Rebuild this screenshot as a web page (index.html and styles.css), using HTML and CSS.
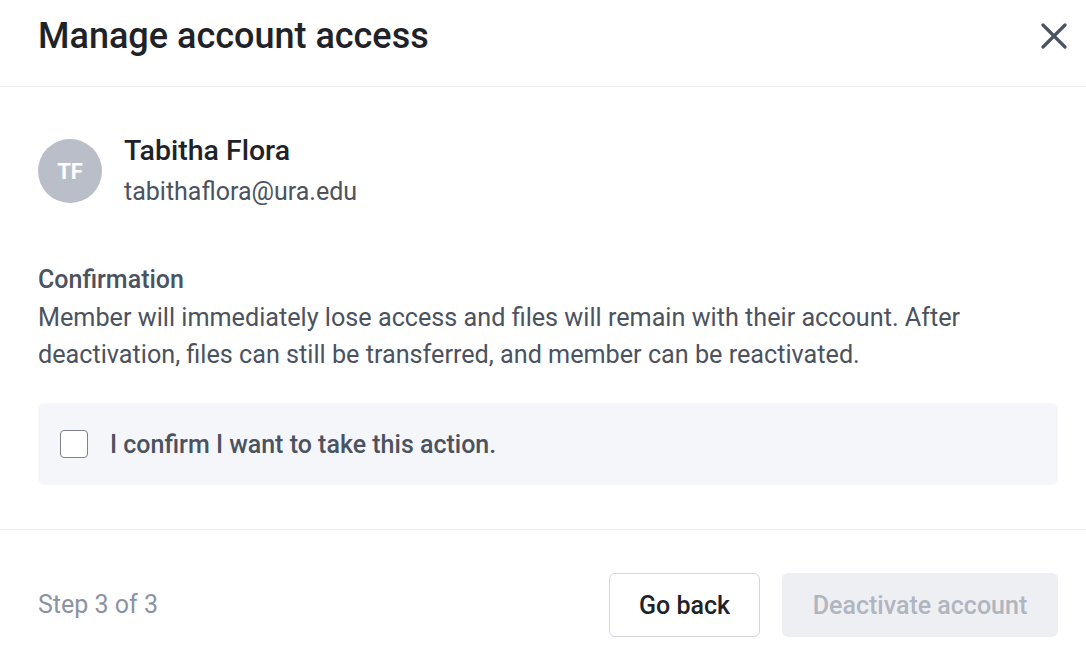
FILE: index.html
```html
<!DOCTYPE html>
<html lang="en">
<head>
    <meta charset="UTF-8">
    <meta name="viewport" content="width=device-width, initial-scale=1.0">
    <title>Manage account access</title>
    <link rel="stylesheet" href="styles.css">
</head>
<body>
    <div class="modal">
        <div class="modal-header">
            <h1>Manage account access</h1>
            <button class="close-btn" type="button" aria-label="Close">
                <svg width="26" height="26" viewBox="0 0 26 26">
                    <path d="M2 2 L24 24 M24 2 L2 24" stroke="#4b5260" stroke-width="3.2" stroke-linecap="round" fill="none"/>
                </svg>
            </button>
        </div>

        <div class="modal-body">
            <div class="member">
                <div class="avatar">TF</div>
                <div class="member-info">
                    <div class="member-name">Tabitha Flora</div>
                    <div class="member-email">tabithaflora@ura.edu</div>
                </div>
            </div>

            <h2>Confirmation</h2>
            <p>Member will immediately lose access and files will remain with their account. After deactivation, files can still be transferred, and member can be reactivated.</p>

            <label class="confirm-box">
                <input type="checkbox" id="confirm">
                <span>I confirm I want to take this action.</span>
            </label>
        </div>

        <div class="modal-footer">
            <span class="step">Step 3 of 3</span>
            <div class="actions">
                <button class="btn btn-secondary" type="button">Go back</button>
                <button class="btn btn-primary" type="button" id="deactivate" disabled>Deactivate account</button>
            </div>
        </div>
    </div>

    <script>
        document.getElementById('confirm').addEventListener('change', function() {
            document.getElementById('deactivate').disabled = !this.checked;
        });
    </script>
</body>
</html>
```

FILE: styles.css
```css
* {
    box-sizing: border-box;
}
body {
    margin: 0;
    font-family: Roboto, "Liberation Sans", Arial, sans-serif;
    background: #fff;
    color: #1f2329;
}
.modal {
    width: 1086px;
    height: 672px;
    display: flex;
    flex-direction: column;
}
.modal-header {
    height: 87px;
    display: flex;
    justify-content: space-between;
    align-items: flex-start;
    padding: 16px 19px 0 38px;
    border-bottom: 1px solid #eeeff2;
}
h1 {
    margin: 0;
    font-size: 36px;
    line-height: 40px;
    font-weight: 500;
    color: #1f2329;
}
.close-btn {
    background: none;
    border: none;
    padding: 0;
    margin-top: 7px;
    cursor: pointer;
    width: 26px;
    height: 26px;
}
.modal-body {
    padding: 48px 28px 44px 38px;
    border-bottom: 1px solid #eeeff2;
}
.member {
    display: flex;
    align-items: center;
    gap: 22px;
}
.avatar {
    width: 64px;
    height: 64px;
    border-radius: 50%;
    background: #b9bec8;
    color: #fff;
    font-size: 22px;
    font-weight: 700;
    display: flex;
    align-items: center;
    justify-content: center;
}
.member-name {
    font-size: 28.5px;
    line-height: 32px;
    font-weight: 500;
    color: #1f2329;
}
.member-email {
    margin-top: 10px;
    font-size: 25px;
    line-height: 30px;
    color: #4b5260;
}
h2 {
    margin: 54px 0 0;
    font-size: 25px;
    line-height: 37px;
    font-weight: 500;
    color: #4b5260;
}
p {
    margin: 1px 0 0;
    font-size: 25.2px;
    line-height: 37px;
    color: #4b5260;
}
.confirm-box {
    margin-top: 30px;
    height: 82px;
    display: flex;
    align-items: center;
    gap: 22px;
    padding: 0 22px;
    background: #f5f6fa;
    border-radius: 6px;
    cursor: pointer;
}
.confirm-box input {
    appearance: none;
    margin: 0;
    width: 28px;
    height: 28px;
    border: 1.5px solid #7c818b;
    border-radius: 4px;
    background: #fff;
    cursor: pointer;
}
.confirm-box input:checked {
    background: #2f6fe4;
    border-color: #2f6fe4;
}
.confirm-box span {
    font-size: 25px;
    font-weight: 500;
    color: #4b5260;
}
.modal-footer {
    flex: 1;
    display: flex;
    justify-content: space-between;
    align-items: flex-start;
    padding: 43px 28px 0 38px;
}
.step {
    font-size: 25px;
    line-height: 64px;
    color: #8a93a3;
}
.actions {
    display: flex;
    gap: 22px;
}
.btn {
    height: 64px;
    padding: 0;
    font-family: inherit;
    font-size: 25px;
    font-weight: 500;
    border-radius: 6px;
    cursor: pointer;
}
.btn-secondary {
    width: 151px;
    background: #fff;
    border: 1px solid #d5d7dc;
    color: #1f2329;
}
.btn-primary {
    width: 276px;
    background: #2f6fe4;
    border: none;
    color: #fff;
}
.btn-primary:disabled {
    background: #eeeff3;
    color: #b0b5bf;
    cursor: default;
}
```
